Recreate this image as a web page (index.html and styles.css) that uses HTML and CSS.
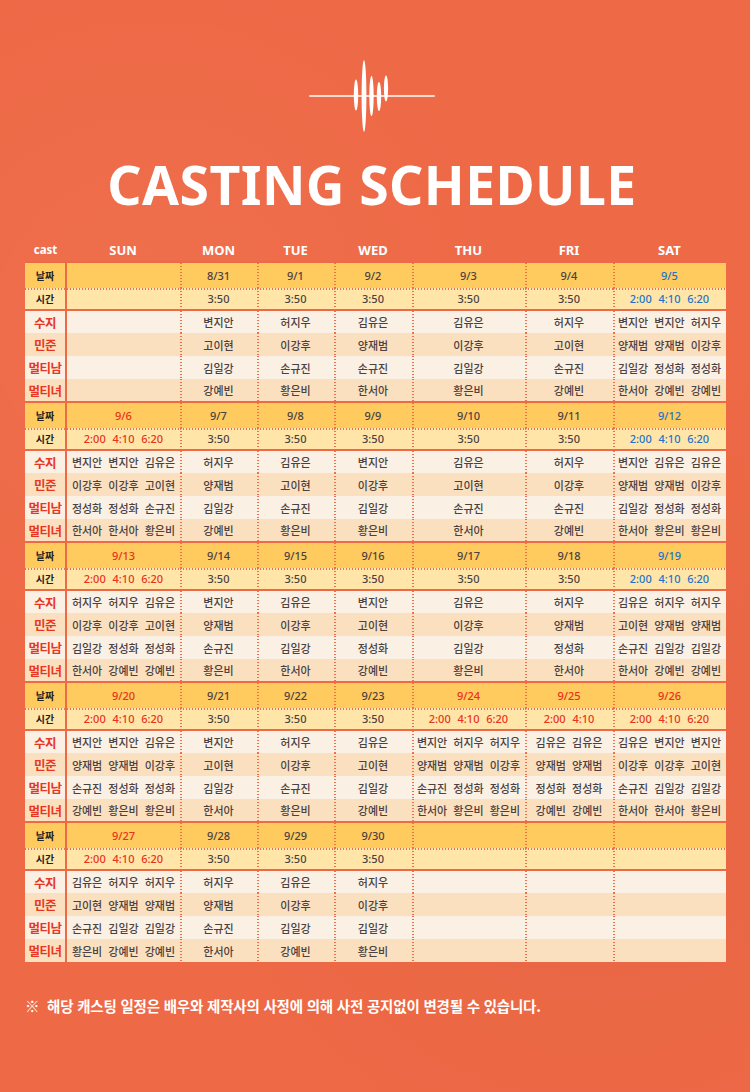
FILE: index.html
```html
<!DOCTYPE html>
<html lang="ko">
<head>
<meta charset="utf-8">
<title>Casting Schedule</title>
<link rel="stylesheet" href="styles.css">
</head>
<body>
<div class="page">
  <div class="logo">
    <svg width="126" height="74" viewBox="0 0 126 74">
      <rect x="0" y="35.2" width="126" height="1.6" rx="0.8" fill="#fff"/>
      <ellipse cx="47" cy="35" rx="2.2" ry="15.5" fill="#fff"/>
      <ellipse cx="55" cy="36" rx="2.4" ry="36" fill="#fff"/>
      <ellipse cx="62.5" cy="36" rx="2.2" ry="20" fill="#fff"/>
      <ellipse cx="70" cy="36.5" rx="2.2" ry="14.5" fill="#fff"/>
      <ellipse cx="77" cy="28.5" rx="2.1" ry="13" fill="#fff"/>
    </svg>
  </div>
  <h1 class="title">CASTING SCHEDULE</h1>

  <table class="sched">
    <colgroup>
      <col class="c-cast"><col class="c-wide"><col class="c-n"><col class="c-n"><col class="c-n2"><col class="c-wide2"><col class="c-m"><col class="c-wide2">
    </colgroup>
    <thead>
      <tr class="head"><th class="lbl">cast</th><th>SUN</th><th>MON</th><th>TUE</th><th>WED</th><th>THU</th><th>FRI</th><th>SAT</th></tr>
    </thead>
    <tbody>
      <!-- week 1 -->
      <tr class="d"><th class="lbl">날짜</th><td></td><td>8/31</td><td>9/1</td><td>9/2</td><td>9/3</td><td>9/4</td><td class="blue">9/5</td></tr>
      <tr class="t"><th class="lbl">시간</th><td></td><td>3:50</td><td>3:50</td><td>3:50</td><td>3:50</td><td>3:50</td><td class="blue">2:00 4:10 6:20</td></tr>
      <tr class="r1"><th class="lbl">수지</th><td></td><td>변지안</td><td>허지우</td><td>김유은</td><td>김유은</td><td>허지우</td><td>변지안 변지안 허지우</td></tr>
      <tr class="r2"><th class="lbl">민준</th><td></td><td>고이현</td><td>이강후</td><td>양재범</td><td>이강후</td><td>고이현</td><td>양재범 양재범 이강후</td></tr>
      <tr class="r1"><th class="lbl">멀티남</th><td></td><td>김일강</td><td>손규진</td><td>손규진</td><td>김일강</td><td>손규진</td><td>김일강 정성화 정성화</td></tr>
      <tr class="r2"><th class="lbl">멀티녀</th><td></td><td>강예빈</td><td>황은비</td><td>한서아</td><td>황은비</td><td>강예빈</td><td>한서아 강예빈 강예빈</td></tr>
      <!-- week 2 -->
      <tr class="d"><th class="lbl">날짜</th><td class="red">9/6</td><td>9/7</td><td>9/8</td><td>9/9</td><td>9/10</td><td>9/11</td><td class="blue">9/12</td></tr>
      <tr class="t"><th class="lbl">시간</th><td class="red">2:00 4:10 6:20</td><td>3:50</td><td>3:50</td><td>3:50</td><td>3:50</td><td>3:50</td><td class="blue">2:00 4:10 6:20</td></tr>
      <tr class="r1"><th class="lbl">수지</th><td>변지안 변지안 김유은</td><td>허지우</td><td>김유은</td><td>변지안</td><td>김유은</td><td>허지우</td><td>변지안 김유은 김유은</td></tr>
      <tr class="r2"><th class="lbl">민준</th><td>이강후 이강후 고이현</td><td>양재범</td><td>고이현</td><td>이강후</td><td>고이현</td><td>이강후</td><td>양재범 양재범 이강후</td></tr>
      <tr class="r1"><th class="lbl">멀티남</th><td>정성화 정성화 손규진</td><td>김일강</td><td>손규진</td><td>김일강</td><td>손규진</td><td>손규진</td><td>김일강 정성화 정성화</td></tr>
      <tr class="r2"><th class="lbl">멀티녀</th><td>한서아 한서아 황은비</td><td>강예빈</td><td>황은비</td><td>황은비</td><td>한서아</td><td>강예빈</td><td>한서아 황은비 황은비</td></tr>
      <!-- week 3 -->
      <tr class="d"><th class="lbl">날짜</th><td class="red">9/13</td><td>9/14</td><td>9/15</td><td>9/16</td><td>9/17</td><td>9/18</td><td class="blue">9/19</td></tr>
      <tr class="t"><th class="lbl">시간</th><td class="red">2:00 4:10 6:20</td><td>3:50</td><td>3:50</td><td>3:50</td><td>3:50</td><td>3:50</td><td class="blue">2:00 4:10 6:20</td></tr>
      <tr class="r1"><th class="lbl">수지</th><td>허지우 허지우 김유은</td><td>변지안</td><td>김유은</td><td>변지안</td><td>김유은</td><td>허지우</td><td>김유은 허지우 허지우</td></tr>
      <tr class="r2"><th class="lbl">민준</th><td>이강후 이강후 고이현</td><td>양재범</td><td>이강후</td><td>고이현</td><td>이강후</td><td>양재범</td><td>고이현 양재범 양재범</td></tr>
      <tr class="r1"><th class="lbl">멀티남</th><td>김일강 정성화 정성화</td><td>손규진</td><td>김일강</td><td>정성화</td><td>김일강</td><td>정성화</td><td>손규진 김일강 김일강</td></tr>
      <tr class="r2"><th class="lbl">멀티녀</th><td>한서아 강예빈 강예빈</td><td>황은비</td><td>한서아</td><td>강예빈</td><td>황은비</td><td>한서아</td><td>한서아 강예빈 강예빈</td></tr>
      <!-- week 4 -->
      <tr class="d"><th class="lbl">날짜</th><td class="red">9/20</td><td>9/21</td><td>9/22</td><td>9/23</td><td class="red">9/24</td><td class="red">9/25</td><td class="red">9/26</td></tr>
      <tr class="t"><th class="lbl">시간</th><td class="red">2:00 4:10 6:20</td><td>3:50</td><td>3:50</td><td>3:50</td><td class="red">2:00 4:10 6:20</td><td class="red">2:00 4:10</td><td class="red">2:00 4:10 6:20</td></tr>
      <tr class="r1"><th class="lbl">수지</th><td>변지안 변지안 김유은</td><td>변지안</td><td>허지우</td><td>김유은</td><td>변지안 허지우 허지우</td><td>김유은 김유은</td><td>김유은 변지안 변지안</td></tr>
      <tr class="r2"><th class="lbl">민준</th><td>양재범 양재범 이강후</td><td>고이현</td><td>이강후</td><td>고이현</td><td>양재범 양재범 이강후</td><td>양재범 양재범</td><td>이강후 이강후 고이현</td></tr>
      <tr class="r1"><th class="lbl">멀티남</th><td>손규진 정성화 정성화</td><td>김일강</td><td>손규진</td><td>김일강</td><td>손규진 정성화 정성화</td><td>정성화 정성화</td><td>손규진 김일강 김일강</td></tr>
      <tr class="r2"><th class="lbl">멀티녀</th><td>강예빈 황은비 황은비</td><td>한서아</td><td>황은비</td><td>강예빈</td><td>한서아 황은비 황은비</td><td>강예빈 강예빈</td><td>한서아 한서아 황은비</td></tr>
      <!-- week 5 -->
      <tr class="d"><th class="lbl">날짜</th><td class="red">9/27</td><td>9/28</td><td>9/29</td><td>9/30</td><td></td><td></td><td></td></tr>
      <tr class="t"><th class="lbl">시간</th><td class="red">2:00 4:10 6:20</td><td>3:50</td><td>3:50</td><td>3:50</td><td></td><td></td><td></td></tr>
      <tr class="r1"><th class="lbl">수지</th><td>김유은 허지우 허지우</td><td>허지우</td><td>김유은</td><td>허지우</td><td></td><td></td><td></td></tr>
      <tr class="r2"><th class="lbl">민준</th><td>고이현 양재범 양재범</td><td>양재범</td><td>이강후</td><td>이강후</td><td></td><td></td><td></td></tr>
      <tr class="r1"><th class="lbl">멀티남</th><td>손규진 김일강 김일강</td><td>손규진</td><td>김일강</td><td>김일강</td><td></td><td></td><td></td></tr>
      <tr class="r2"><th class="lbl">멀티녀</th><td>황은비 강예빈 강예빈</td><td>한서아</td><td>강예빈</td><td>황은비</td><td></td><td></td><td></td></tr>
    </tbody>
  </table>

  <p class="note">※&nbsp; 해당 캐스팅 일정은 배우와 제작사의 사정에 의해 사전 공지없이 변경될 수 있습니다.</p>
</div>
</body>
</html>
```

FILE: styles.css
```css
* { box-sizing: border-box; }

html, body {
  margin: 0;
  padding: 0;
}

body {
  background: #ee6946;
  background-image:
    radial-gradient(circle at 20% 30%, rgba(255,255,255,0.04), transparent 40%),
    radial-gradient(circle at 80% 70%, rgba(0,0,0,0.03), transparent 45%);
  font-family: "Noto Sans CJK KR", "Noto Sans", sans-serif;
  width: 750px;
  height: 1092px;
  overflow: hidden;
}

.page {
  display: flex;
  flex-direction: column;
  align-items: center;
  padding-top: 60px;
}

.logo {
  display: flex;
  justify-content: center;
  width: 126px;
  height: 74px;
  margin-left: -6px;
}

.logo svg { display: block; }

.title {
  margin: 18px 0 0 -6px;
  color: #fff;
  font-family: "Noto Sans", sans-serif;
  font-weight: 700;
  font-size: 53.5px;
  line-height: 66px;
  letter-spacing: 0.4px;
}

.sched {
  margin-top: 15px;
  margin-left: 25px;
  width: 701px;
  table-layout: fixed;
  border-collapse: collapse;
  align-self: flex-start;
}

.c-cast { width: 41px; }
.c-wide { width: 114px; }
.c-n { width: 77px; }
.c-n2 { width: 78px; }
.c-wide2 { width: 113px; }
.c-m { width: 88px; }

.sched th,
.sched td {
  padding: 0;
  text-align: center;
  white-space: nowrap;
  overflow: hidden;
  word-spacing: 3px;
}

.head th {
  color: #fff;
  font-family: "Noto Sans", sans-serif;
  font-weight: 700;
  font-size: 13px;
  height: 29px;
  vertical-align: middle;
  padding-top: 5px;
  border: none;
}

.head th.lbl { font-size: 11.5px; }

.sched tbody td {
  color: #4a4242;
  font-size: 11px;
  font-weight: 500;
  background-repeat: no-repeat;
}

/* vertical dotted separators between day columns */
.sched tbody td:not(:first-of-type) {
  background-image: linear-gradient(to bottom, #f0704c 1.5px, transparent 1.5px);
  background-size: 1.5px 3px;
  background-repeat: repeat-y;
  background-position: left top;
}

/* time rows also carry the horizontal dotted line at their top */
.sched tbody .t th,
.sched tbody .t td:first-of-type {
  background-image: linear-gradient(to right, #f0704c 1.5px, transparent 1.5px);
  background-size: 3px 1.5px;
  background-repeat: repeat-x;
  background-position: left top;
}

.sched tbody .t td:not(:first-of-type) {
  background-image:
    linear-gradient(to right, #f0704c 1.5px, transparent 1.5px),
    linear-gradient(to bottom, #f0704c 1.5px, transparent 1.5px);
  background-size: 3px 1.5px, 1.5px 3px;
  background-repeat: repeat-x, repeat-y;
  background-position: left top, left top;
}

.sched tbody th.lbl {
  border-right: 2px solid #ee6946;
}

.d th, .d td {
  background-color: #ffca5e;
  height: 26px;
  border-top: 2px solid #ee6946;
}

.d td {
  font-family: "Noto Sans", sans-serif;
  font-size: 14.5px;
  font-weight: 700;
  color: #262222;
  word-spacing: 0;
}

.t th, .t td {
  background-color: #ffe6a8;
  height: 22px;
  border-bottom: 2px solid #ee6946;
}

.t td {
  font-family: "Noto Sans", sans-serif;
  font-size: 13px;
  font-weight: 700;
  color: #262222;
  word-spacing: 4px;
}

.d th.lbl, .t th.lbl {
  font-size: 10px;
  font-weight: 700;
  color: #262222;
}

.r1 th, .r1 td { background-color: #fbf0e4; height: 23px; }
.r2 th, .r2 td { background-color: #fbe0bf; height: 23px; }

.r1 th.lbl, .r2 th.lbl {
  color: #e8361f;
  font-size: 12.5px;
  font-weight: 700;
  letter-spacing: -0.5px;
}

.sched td.red { color: #e8321c; }
.sched td.blue { color: #1e72c8; }

.note {
  align-self: flex-start;
  margin: 33px 0 0 25px;
  color: #fff;
  font-size: 14.5px;
  font-weight: 700;
  letter-spacing: -0.2px;
  line-height: 21px;
}
```
